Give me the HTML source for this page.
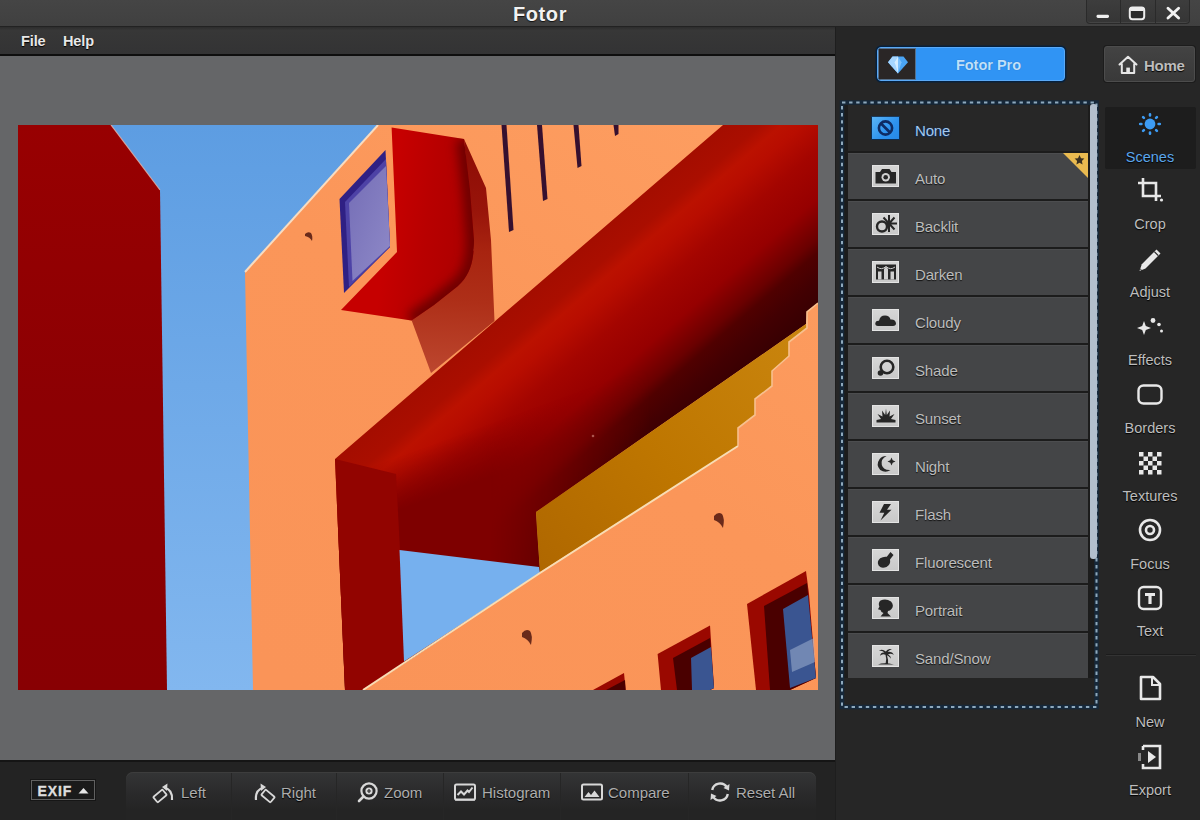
<!DOCTYPE html>
<html lang="en">
<head>
<meta charset="utf-8">
<title>Fotor</title>
<style>
html,body{margin:0;padding:0;}
body{width:1200px;height:820px;position:relative;overflow:hidden;background:#262626;font-family:"Liberation Sans",Arial,sans-serif;color:#d0d0d0;}
.abs{position:absolute;}
#titlebar{left:0;top:0;width:1200px;height:27px;background:linear-gradient(#454545,#404040);border-bottom:1.5px solid #222;box-sizing:border-box;}
#title{left:0;top:1px;width:1080px;text-align:center;font-weight:bold;font-size:20px;line-height:26px;color:#f2f2f2;letter-spacing:.6px;text-shadow:0 1px 1px #111;}
#menubar{left:0;top:27px;width:835px;height:29px;background:linear-gradient(#2c2c2c,#373737 12%,#333334);border-bottom:2px solid #0e0e0e;box-sizing:border-box;}
.menu{top:32.5px;font-weight:bold;font-size:14.5px;line-height:16px;letter-spacing:-.1px;color:#e8e8e8;text-shadow:0 1px 1px #000;}
#canvas{left:0;top:56px;width:835px;height:704px;background:#656668;}
#photo{left:18px;top:125px;width:800px;height:565px;}
#bottombar{left:0;top:760px;width:835px;height:60px;background:#232323;border-top:2px solid #151515;box-sizing:border-box;}
#right{left:835px;top:27px;width:365px;height:793px;background:#262626;border-left:1px solid #1e1e1e;box-sizing:border-box;}
</style>
</head>
<body>
<div id="titlebar" class="abs"></div>
<div id="title" class="abs">Fotor</div>
<div id="menubar" class="abs"></div>
<div class="abs menu" style="left:21px">File</div>
<div class="abs menu" style="left:63px">Help</div>
<div id="right" class="abs"></div>
<div id="canvas" class="abs"></div>
<svg id="photo" class="abs" viewBox="18 125 800 565" width="800" height="565">
<defs>
<linearGradient id="gsky" x1="0" y1="0" x2="0" y2="1"><stop offset="0" stop-color="#5d9de2"/><stop offset="1" stop-color="#82b7ef"/></linearGradient>
<linearGradient id="gpil" x1="0" y1="0" x2="0" y2="1"><stop offset="0" stop-color="#980001"/><stop offset=".5" stop-color="#8c0003"/><stop offset="1" stop-color="#880003"/></linearGradient>
<linearGradient id="gwall" gradientUnits="userSpaceOnUse" x1="300" y1="690" x2="700" y2="125"><stop offset="0" stop-color="#fa9458"/><stop offset=".55" stop-color="#fb9659"/><stop offset="1" stop-color="#fd9d60"/></linearGradient>
<linearGradient id="gbeam" gradientUnits="userSpaceOnUse" x1="580" y1="249" x2="710.6" y2="400.4"><stop offset="0" stop-color="#a40d00"/><stop offset=".12" stop-color="#aa0e00"/><stop offset=".19" stop-color="#bb1100"/><stop offset=".26" stop-color="#b80d00"/><stop offset=".4" stop-color="#a40500"/><stop offset=".585" stop-color="#960000"/><stop offset=".735" stop-color="#6a0000"/><stop offset=".79" stop-color="#500000"/><stop offset=".89" stop-color="#420002"/><stop offset="1" stop-color="#380002"/></linearGradient><linearGradient id="gunder" gradientUnits="userSpaceOnUse" x1="494.9" y1="421.9" x2="512" y2="468.9"><stop offset="0" stop-color="#7e0000" stop-opacity="0"/><stop offset="1" stop-color="#7e0000" stop-opacity="1"/></linearGradient><linearGradient id="gmx" gradientUnits="userSpaceOnUse" x1="490" y1="0" x2="650" y2="0"><stop offset="0" stop-color="#fff"/><stop offset="1" stop-color="#000"/></linearGradient><mask id="mbeam" maskUnits="userSpaceOnUse" x="18" y="125" width="800" height="565"><rect x="18" y="125" width="800" height="565" fill="url(#gmx)"/></mask>
<linearGradient id="gbox" gradientUnits="userSpaceOnUse" x1="392" y1="200" x2="476" y2="212"><stop offset="0" stop-color="#c60000"/><stop offset=".45" stop-color="#b80000"/><stop offset="1" stop-color="#ac0000"/></linearGradient><clipPath id="cbox"><path d="M391.6,127.6 L464,139 L470,190 L474,240 C474,262 470,275 458,286 L434,305 L411.5,320.5 L341,310 L397,252 Z"/></clipPath><filter id="fblur" x="-50%" y="-50%" width="200%" height="200%"><feGaussianBlur stdDeviation="5.5"/></filter>
<linearGradient id="gshad" gradientUnits="userSpaceOnUse" x1="480" y1="140" x2="470" y2="372"><stop offset="0" stop-color="#8c0c04"/><stop offset=".3" stop-color="#98140a"/><stop offset=".48" stop-color="#a82410"/><stop offset=".7" stop-color="#ae2f18"/><stop offset="1" stop-color="#bc462e"/></linearGradient>
<linearGradient id="gglass" x1="0" y1="0" x2="1" y2="1"><stop offset="0" stop-color="#746db6"/><stop offset="1" stop-color="#8f8ac8"/></linearGradient>
<linearGradient id="gyel" gradientUnits="userSpaceOnUse" x1="540" y1="560" x2="800" y2="330"><stop offset="0" stop-color="#b06800"/><stop offset=".45" stop-color="#be7600"/><stop offset="1" stop-color="#c9850e"/></linearGradient>
</defs>
<rect x="18" y="125" width="800" height="565" fill="url(#gsky)"/>
<!-- left pillar -->
<polygon points="18,125 111,125 160,190 167,690 18,690" fill="url(#gpil)"/>
<polyline points="111,125 160,190" fill="none" stroke="#e9b5a8" stroke-width="1.2" opacity=".8"/>
<!-- building -->
<polygon points="378,125 818,125 818,690 253,690 245,272" fill="url(#gwall)"/>
<polyline points="245,272 378,125" fill="none" stroke="#f9dcc0" stroke-width="2"/>
<!-- slits -->
<polygon points="501.5,125 506.5,125 513.5,230 509,232" fill="#36102f"/>
<polygon points="537,125 542,125 547.5,199 543,201" fill="#36102f"/>
<polygon points="573.5,125 578.5,125 581.5,166 577.5,168" fill="#36102f"/>
<polygon points="613.5,125 618.5,125 618.5,134 615,136" fill="#36102f"/>
<!-- window -->
<polygon points="339.5,199 385.5,150 390,247 344,293" fill="#2f2084"/>
<polygon points="345,202 386,159 390,247 349,287" fill="#4d42a6"/>
<polygon points="349,203 386,166 390,246 352.5,281" fill="url(#gglass)"/>
<!-- box shadow/side -->
<polygon points="464,139 486,188 491,240 494.5,321 431,373 411.5,320 474,250" fill="url(#gshad)"/>
<!-- box front -->
<path d="M391.6,127.6 L464,139 L470,190 L474,240 C474,262 470,275 458,286 L434,305 L411.5,320.5 L341,310 L397,252 Z" fill="url(#gbox)"/>
<g clip-path="url(#cbox)"><path d="M464,139 L470,190 L474,240 C474,262 470,275 458,286 L434,305 L411.5,320.5" fill="none" stroke="#6a0000" stroke-width="15" filter="url(#fblur)"/></g>
<!-- beam -->
<polygon points="335,459 723,125 818,125 818,303 807,312 806,324 536,512 540,572 404,664 363,690 345,690" fill="url(#gbeam)"/>
<polygon points="335,459 380,440 700,330 700,420 536,512 540,572 404,664 363,690 345,690" fill="url(#gunder)" mask="url(#mbeam)"/>
<polygon points="335,459 396,474 400,550 404,664 363,690 345,690" fill="#920400"/>
<!-- sky opening -->
<polygon points="399.5,550 539,567 540,573 404,661.5" fill="#76b0ee"/>
<!-- yellow -->
<polygon points="536,512 806,324 807,328 789,342 789,356 772,371 772,386 755,399 755,415 738,428 738,446 540,572 537,530" fill="url(#gyel)"/>
<!-- balcony -->
<polygon points="363,690 614,530 738,446 738,428 755,415 755,399 772,386 772,371 789,356 789,342 807,328 807,312 818,303 818,690" fill="url(#gwall)"/>
<polyline points="363,690 540,573 738,446" fill="none" stroke="#f8ddb4" stroke-width="2"/>
<polyline points="738,446 738,428 755,415 755,399 772,386 772,371 789,356 789,342 807,328 807,312 818,303" fill="none" stroke="#f7c08e" stroke-width="1.6"/>
<!-- windows lower right -->
<polygon points="747,604 806,571 809,594 816,678 790,690 756,690" fill="#9a0800"/>
<polygon points="764,606 807,583 816,678 790,690 770,690" fill="#4a0000"/>
<polygon points="783,609 808,595 816,678 790,688" fill="#3a5591"/>
<polygon points="790,650 814,638 815,662 792,672" fill="#9fb0cf" opacity=".55"/>
<polygon points="657.6,654 710,625.6 714,688 710,690 661,690" fill="#9a0800"/>
<polygon points="673,658 710,638 714,688 710,690 677,690" fill="#4a0000"/>
<polygon points="691,658 711,647 714,688 710,690 692,690" fill="#3a5591"/>
<polygon points="593,690 624,673 625.6,690" fill="#9a0800"/>
<polygon points="606,690 625,680 625.6,690" fill="#4a0000"/>
<!-- hooks -->
<path d="M522,633 q4,-5 8,-2 q3,4 1,14 q-3,-6 -9,-8 z" fill="#6a2a1a"/>
<path d="M714,516 q4,-5 8,-2 q3,4 1,14 q-3,-6 -9,-8 z" fill="#6a2a1a"/>
<path d="M305,234 q3,-3 6,-1 q2,3 1,8 q-2,-4 -7,-5 z" fill="#6a2a1a"/>
<circle cx="593" cy="436" r="1.3" fill="#c77a70" opacity=".7"/>
</svg>

<div id="bottombar" class="abs"></div>
<style>
#exif{left:31px;top:780px;width:64px;height:20px;box-sizing:border-box;border:1.5px solid #606060;background:#1a1a1a;box-shadow:0 0 0 1px #161616;}
#exif .tx{left:5.5px;top:.5px;line-height:19px;font-size:14px;font-weight:bold;letter-spacing:.9px;color:#dedede;-webkit-text-stroke:.35px #dedede;}
#bgroup{left:126px;top:772px;width:690px;height:48px;background:linear-gradient(#343536,#2a2a2b 45%,#242424 80%);border-radius:7px 7px 0 0;box-shadow:inset 0 1px 0 #3d3d3d;}
.bdiv{top:773px;width:1px;height:47px;background:#262626;}
.bt{top:783.5px;line-height:18px;font-size:15px;letter-spacing:0;color:#adadad;text-shadow:0 1px 1px #000;}
.bi{top:780px;width:24px;height:24px;}
</style>
<div id="exif" class="abs"><div class="abs tx">EXIF</div><svg class="abs" style="left:46px;top:6px" width="11" height="7" viewBox="0 0 11 7"><path d="M0.5,6.5 L5.5,1 L10.5,6.5 Z" fill="#e6e6e6"/></svg></div>
<div id="bgroup" class="abs"></div>
<div class="abs bdiv" style="left:231px"></div><div class="abs bdiv" style="left:336px"></div><div class="abs bdiv" style="left:443px"></div><div class="abs bdiv" style="left:560px"></div><div class="abs bdiv" style="left:688px"></div>
<svg class="abs bi" style="left:152px" viewBox="0 0 24 24"><g transform="rotate(-40 8 16)"><rect x="2" y="12.5" width="12" height="7" rx="1" fill="none" stroke="#d8d8d8" stroke-width="1.8"/></g><path d="M20,20 Q21,10 12.5,7.5" fill="none" stroke="#d8d8d8" stroke-width="2.2"/><path d="M10,7 L15.5,3.5 L15,11 Z" fill="#d8d8d8"/></svg>
<div class="abs bt" style="left:181px">Left</div>
<svg class="abs bi" style="left:252px" viewBox="0 0 24 24"><g transform="rotate(40 16 16)"><rect x="10" y="12.5" width="12" height="7" rx="1" fill="none" stroke="#d8d8d8" stroke-width="1.8"/></g><path d="M4,20 Q3,10 11.5,7.5" fill="none" stroke="#d8d8d8" stroke-width="2.2"/><path d="M14,7 L8.5,3.5 L9,11 Z" fill="#d8d8d8"/></svg>
<div class="abs bt" style="left:281px">Right</div>
<svg class="abs bi" style="left:356px" viewBox="0 0 24 24"><circle cx="13" cy="11" r="7.6" fill="none" stroke="#d8d8d8" stroke-width="2.2"/><path d="M7.5,16.5 L3,21" stroke="#d8d8d8" stroke-width="2.6" stroke-linecap="round"/><circle cx="13" cy="11" r="3.6" fill="#d8d8d8"/><path d="M13,9 V13 M11,11 H15" stroke="#2b2b2b" stroke-width="1.2"/></svg>
<div class="abs bt" style="left:384px">Zoom</div>
<svg class="abs bi" style="left:453px" viewBox="0 0 24 24"><rect x="2" y="4.5" width="20" height="15" rx="1.5" fill="none" stroke="#d8d8d8" stroke-width="2"/><path d="M4.5,15 L8,11.5 L11,14.5 L14.5,10.5 L16,12 L19.5,7.5" fill="none" stroke="#d8d8d8" stroke-width="2"/><path d="M2,20 H22" stroke="#d8d8d8" stroke-width="1.4"/></svg>
<div class="abs bt" style="left:482px">Histogram</div>
<svg class="abs bi" style="left:580px" viewBox="0 0 24 24"><rect x="2" y="4.5" width="20" height="15" rx="1.5" fill="none" stroke="#d8d8d8" stroke-width="2"/><path d="M4.5,17 L8.5,12 L11,15 L14.5,10.5 L19.5,17 Z" fill="#d8d8d8"/></svg>
<div class="abs bt" style="left:608px">Compare</div>
<svg class="abs bi" style="left:708px" viewBox="0 0 24 24"><path d="M4.2,10 A8,8 0 0 1 19,7.5" fill="none" stroke="#d8d8d8" stroke-width="2.4"/><path d="M19.8,14 A8,8 0 0 1 5,16.5" fill="none" stroke="#d8d8d8" stroke-width="2.4"/><path d="M21.5,4 L21,10.5 L15.5,8 Z" fill="#d8d8d8"/><path d="M2.5,20 L3,13.5 L8.5,16 Z" fill="#d8d8d8"/></svg>
<div class="abs bt" style="left:736px">Reset All</div>

<style>
.wbtn{top:0;height:24px;background:linear-gradient(#3d3d3d,#353535);border:1px solid #2a2a2a;border-top:none;box-sizing:border-box;box-shadow:inset 0 -1px 0 #444;}
#pro{left:877px;top:47px;width:188px;height:34px;box-sizing:border-box;border:1px solid #5aa9f6;border-radius:4px;background:#3094f4;overflow:hidden;box-shadow:0 0 0 1.5px #06203c;}
#pro .ic{left:0;top:0;width:38px;height:32px;background:#2a2626;box-shadow:inset 0 0 0 1px #55708c;}
#pro .tx{left:37px;top:.5px;width:147px;height:32px;line-height:33px;text-align:center;font-weight:bold;font-size:14.5px;color:#bfe0fb;text-shadow:0 0 1px #1b62b0;}
#home{left:1104px;top:46px;width:91px;height:36px;box-sizing:border-box;border:1px solid #4c4c4c;border-radius:3px;background:linear-gradient(#434343,#393939);box-shadow:0 0 0 1px #1c1c1c;}
#home .tx{left:39px;top:.5px;height:34px;line-height:35px;font-size:15px;letter-spacing:-.3px;color:#bdbdbd;text-shadow:0 1px 1px #000;font-weight:bold;}
#listbox{left:842px;top:102px;width:255px;height:605px;background:linear-gradient(#1c1c1c,#1c1c1c 576px,#242424 576px);}
.li{left:848px;width:240px;height:46px;background:#444547;box-shadow:inset 0 1px 0 #4c4d4f;}
.li.sel{background:#272727;box-shadow:none;}
.li .ic{left:24px;top:12px;width:27px;height:22px;background:linear-gradient(#d6d6d6,#c9c9c9);border:1px solid #e4e4e4;box-sizing:border-box;}
.li.sel .ic{left:23px;top:11px;width:29px;height:24px;background:linear-gradient(135deg,#5ab4f6,#2d92ee 60%,#2688e6);border:1px solid #0d2c50;border-top-color:#1a3a5c;}
.li .tx{left:67px;top:2px;height:46px;line-height:47px;font-size:15px;letter-spacing:-.15px;color:#bcbcbc;text-shadow:0 1px 1px #111;}
.li.sel .tx{color:#a4c8ec;text-shadow:0 0 2px #0c2f60,0 1px 1px #0c2f60;}
#scroll{left:1090px;top:104px;width:7px;height:455px;border-radius:3px;background:#b2bfcd;}
.tl{left:1104px;width:92px;text-align:center;font-size:14.5px;line-height:16px;color:#c8c8c8;text-shadow:0 1px 1px #000;}
.ti{left:1135px;width:30px;height:30px;}
</style>
<div class="abs wbtn" style="left:1086px;width:35px;border-radius:0 0 0 4px"></div>
<div class="abs wbtn" style="left:1120px;width:36px"></div>
<div class="abs wbtn" style="left:1155px;width:35px;border-radius:0 0 4px 0"></div>
<svg class="abs" style="left:1086px;top:0" width="104" height="24" viewBox="0 0 104 24">
<rect x="10.5" y="14.8" width="12.5" height="3.2" rx="1.4" fill="#f0f0f0"/>
<rect x="43.8" y="7.6" width="14.4" height="11.6" rx="2.6" fill="#2a2a2a" stroke="#ececec" stroke-width="2"/><rect x="43.8" y="7" width="14.4" height="4" rx="1.4" fill="#ececec"/>
<path d="M82,8.3 L92.6,18 M92.6,8.3 L82,18" stroke="#f2f2f2" stroke-width="2.9" stroke-linecap="round"/>
</svg>
<div id="pro" class="abs"><div class="abs ic"><svg class="abs" style="left:9px;top:7px" width="22" height="20" viewBox="0 0 22 20"><path d="M5.5,1.5 H16.5 L21,7.2 L11,18.5 L1,7.2 Z" fill="#4aa4f4"/><path d="M5.5,1.5 H11 V18.5 L1,7.2 Z" fill="#a6d6ff"/><path d="M11,1.5 L14.5,7.2 L11,18.5 L7.5,7.2 Z" fill="#7cc0fb"/><path d="M11,1.5 V18.5 L7.5,7.2 Z" fill="#d4ecff"/></svg></div><div class="abs tx">Fotor Pro</div></div>
<div id="home" class="abs"><svg class="abs" style="left:12px;top:7px" width="22" height="21" viewBox="0 0 22 21"><path d="M2.5,10.5 L11,2.8 L19.5,10.5 M4.8,9.5 V19 H17.2 V9.5" fill="none" stroke="#e6e6e6" stroke-width="2" stroke-linejoin="round" stroke-linecap="round"/><rect x="9.3" y="13.6" width="3.6" height="5" fill="#e6e6e6"/></svg><div class="abs tx">Home</div></div>
<div id="listbox" class="abs"></div><svg class="abs" style="left:838px;top:98px" width="264" height="614" viewBox="838 98 264 614"><rect x="842" y="102.5" width="254.5" height="604.5" fill="none" stroke="#16283a" stroke-width="4.5"/><rect x="842" y="102.5" width="254.5" height="604.5" fill="none" stroke="#8ea9bd" stroke-width="2" stroke-dasharray="3.4 3.7"/></svg>
<div class="abs li sel" style="top:105px"><div class="abs ic"><svg class="abs" style="left:-1px;top:-1px" width="29" height="24" viewBox="0 0 29 24"><circle cx="14.5" cy="12" r="6.6" fill="none" stroke="#0e2b63" stroke-width="2.6"/><path d="M10,7.5 L19,16.5" stroke="#0e2b63" stroke-width="2.6"/></svg></div><div class="abs tx">None</div></div>
<div class="abs li" style="top:153px"><div class="abs ic"><svg class="abs" style="left:-1px;top:-1px" width="27" height="22" viewBox="0 0 27 22"><path d="M3.5,7 H8 L10,4 H17.5 L19.5,7 H24 V18.5 H3.5 Z" fill="#262626"/><circle cx="13.7" cy="12.3" r="4.2" fill="#d0d0d0"/><circle cx="13.7" cy="12.3" r="2.3" fill="#262626"/></svg></div><div class="abs tx">Auto</div><svg class="abs" style="right:0;top:0" width="25" height="25" viewBox="0 0 25 25"><path d="M0,0 H25 V25 Z" fill="#e9ba50"/><path d="M16.5,2 l1.5,3.2 3.4,.4 -2.5,2.4 .7,3.4 -3.1,-1.7 -3.1,1.7 .7,-3.4 -2.5,-2.4 3.4,-.4z" fill="#3a3020"/></svg></div>
<div class="abs li" style="top:201px"><div class="abs ic"><svg class="abs" style="left:-1px;top:-1px" width="27" height="22" viewBox="0 0 27 22"><g stroke="#262626" stroke-width="2"><path d="M17,2 V19 M10,10.5 H25 M11.5,4.5 L22.5,16.5 M22.5,4.5 L11.5,16.5"/></g><circle cx="10" cy="13.5" r="5" fill="#d0d0d0" stroke="#262626" stroke-width="2.4"/></svg></div><div class="abs tx">Backlit</div></div>
<div class="abs li" style="top:249px"><div class="abs ic"><svg class="abs" style="left:-1px;top:-1px" width="27" height="22" viewBox="0 0 27 22"><rect x="4" y="3.5" width="20" height="15" fill="#262626"/><path d="M6,18.5 V10.5 H9.5 V18.5 M12,18.5 V8 L14,5.5 L16,8 V18.5 M18.5,18.5 V10.5 H22 V18.5" fill="#d0d0d0"/><path d="M5,6 Q9.5,9.5 14,5.5 Q18.5,9.5 23,6" fill="none" stroke="#d0d0d0" stroke-width="1"/></svg></div><div class="abs tx">Darken</div></div>
<div class="abs li" style="top:297px"><div class="abs ic"><svg class="abs" style="left:-1px;top:-1px" width="27" height="22" viewBox="0 0 27 22"><path d="M6,17 Q3,17 3.3,14 Q3.8,11.5 7,11.8 Q8,6.5 13,6.5 Q17.5,6.5 18.5,10.5 Q23.5,10 24,14.3 Q24,17 21,17 Z" fill="#262626"/></svg></div><div class="abs tx">Cloudy</div></div>
<div class="abs li" style="top:345px"><div class="abs ic"><svg class="abs" style="left:-1px;top:-1px" width="27" height="22" viewBox="0 0 27 22"><circle cx="15" cy="10" r="6.3" fill="none" stroke="#262626" stroke-width="2.6"/><circle cx="8.5" cy="16" r="2.8" fill="#262626"/></svg></div><div class="abs tx">Shade</div></div>
<div class="abs li" style="top:393px"><div class="abs ic"><svg class="abs" style="left:-1px;top:-1px" width="27" height="22" viewBox="0 0 27 22"><path d="M4.5,17.5 H23.5 V15 L19,14 L22.5,9 L17.5,11.5 L18,5.5 L14.8,10 L14,3.5 L13.2,10 L10,5.5 L10.5,11.5 L5.5,9 L9,14 L4.5,15 Z" fill="#262626"/></svg></div><div class="abs tx">Sunset</div></div>
<div class="abs li" style="top:441px"><div class="abs ic"><svg class="abs" style="left:-1px;top:-1px" width="27" height="22" viewBox="0 0 27 22"><path d="M14.5,3 Q8.5,6 9.8,12 Q11.5,17.5 18.5,17 Q13.5,20.5 8.2,17 Q3.5,12 7.5,6.3 Q10.2,2.8 14.5,3 Z" fill="#262626"/><path d="M19.5,4.5 L20.7,7.3 L23.5,8.5 L20.7,9.7 L19.5,12.5 L18.3,9.7 L15.5,8.5 L18.3,7.3 Z" fill="#262626"/></svg></div><div class="abs tx">Night</div></div>
<div class="abs li" style="top:489px"><div class="abs ic"><svg class="abs" style="left:-1px;top:-1px" width="27" height="22" viewBox="0 0 27 22"><path d="M12,3 H19 L15,8.8 H19.5 L8.5,19.5 L12.3,11.8 H7.5 Z" fill="#262626"/></svg></div><div class="abs tx">Flash</div></div>
<div class="abs li" style="top:537px"><div class="abs ic"><svg class="abs" style="left:-1px;top:-1px" width="27" height="22" viewBox="0 0 27 22"><path d="M18.5,3 L21.5,6 L18,10.5 Q19,15.5 14.5,18 Q9.5,20 6.8,16.8 Q4.3,12.5 8.2,9.3 Q11.5,7.2 14.8,7.8 Z" fill="#262626"/></svg></div><div class="abs tx">Fluorescent</div></div>
<div class="abs li" style="top:585px"><div class="abs ic"><svg class="abs" style="left:-1px;top:-1px" width="27" height="22" viewBox="0 0 27 22"><path d="M8.5,3.5 Q14,1 19,4.5 Q22.5,8.5 19.5,12 Q18,14 16,14 L15.5,16 L19,19.5 H8.5 L11.5,16 Q9,15.5 8.5,13 L6,12.3 L7.4,9.7 Q5.8,6 8.5,3.5 Z" fill="#262626"/></svg></div><div class="abs tx">Portrait</div></div>
<div class="abs li" style="top:633px;height:45px"><div class="abs ic"><svg class="abs" style="left:-1px;top:-1px" width="27" height="22" viewBox="0 0 27 22"><path d="M13.5,19.5 Q15,14 13.5,9.8 Q10.5,8.2 8,10.8 Q9,7 12.5,7.6 Q10,5 7,6 Q10,3.2 13.8,6.6 Q16,3 20,4.5 Q17,4.8 15.7,7 Q20,6 22,9.7 Q18.5,8.2 16,9.2 Q19,10.8 19,13.8 Q17,10.8 15,10.3 Q16.5,14.8 16,19.5 Z M6,19.5 Q11.5,16.8 22,19.5 Z" fill="#262626"/></svg></div><div class="abs tx">Sand/Snow</div></div>
<div id="scroll" class="abs"></div>
<div class="abs" style="left:1105px;top:107px;width:91px;height:62px;background:#1d1d1d;border-radius:2px;"></div>
<div class="abs" style="left:1106px;top:654px;width:90px;height:1px;background:#333;border-top:1px solid #1c1c1c"></div>
<svg class="abs ti" style="top:109px" viewBox="0 0 30 30"><circle cx="15" cy="15" r="5.4" fill="#3d9cf4"/><g stroke="#3d9cf4" stroke-width="2.6" stroke-linecap="round"><path d="M15,5.2 V6.4 M15,23.6 V24.8 M5.2,15 H6.4 M23.6,15 H24.8 M8.1,8.1 L8.9,8.9 M21.1,21.1 L21.9,21.9 M8.1,21.9 L8.9,21.1 M21.1,8.9 L21.9,8.1"/></g></svg><div class="abs tl" style="top:149px;color:#5ba6ec">Scenes</div>
<svg class="abs ti" style="top:175px" viewBox="0 0 30 30"><path d="M8,3 V21 H26 M3,8 H21 V26" fill="none" stroke="#e8e8e8" stroke-width="2.6"/><circle cx="26.5" cy="25" r="1.6" fill="#e8e8e8"/></svg><div class="abs tl" style="top:216px;color:#bdbdbd">Crop</div>
<svg class="abs ti" style="top:245px" viewBox="0 0 30 30"><path d="M21.5,4.5 L25.5,8.5 L10.5,23.5 L4.5,26 L6.8,19.2 Z" fill="#e8e8e8"/><path d="M19.3,6.7 L23.3,10.7" stroke="#262626" stroke-width="1.2"/><path d="M5.2,24 L7,25.6" stroke="#262626" stroke-width="1"/></svg><div class="abs tl" style="top:284px;color:#bdbdbd">Adjust</div>
<svg class="abs ti" style="top:312px" viewBox="0 0 30 30"><path d="M9,9 L10.8,14 L16,16 L10.8,18 L9,23 L7.2,18 L2,16 L7.2,14 Z" fill="#e8e8e8"/><circle cx="18" cy="8.5" r="2.4" fill="#e8e8e8"/><circle cx="24" cy="12.5" r="1.8" fill="#e8e8e8"/><circle cx="26.5" cy="19" r="1.5" fill="#e8e8e8"/></svg><div class="abs tl" style="top:352px;color:#bdbdbd">Effects</div>
<svg class="abs ti" style="top:380px" viewBox="0 0 30 30"><rect x="3.5" y="5.5" width="23" height="18" rx="5" fill="none" stroke="#e8e8e8" stroke-width="2.4"/></svg><div class="abs tl" style="top:420px;color:#bdbdbd">Borders</div>
<svg class="abs ti" style="top:448px" viewBox="0 0 30 30"><rect x="4.0" y="4.0" width="4.5" height="4.5" fill="#e8e8e8"/><rect x="13.0" y="4.0" width="4.5" height="4.5" fill="#e8e8e8"/><rect x="22.0" y="4.0" width="4.5" height="4.5" fill="#e8e8e8"/><rect x="8.5" y="8.5" width="4.5" height="4.5" fill="#e8e8e8"/><rect x="17.5" y="8.5" width="4.5" height="4.5" fill="#e8e8e8"/><rect x="4.0" y="13.0" width="4.5" height="4.5" fill="#e8e8e8"/><rect x="13.0" y="13.0" width="4.5" height="4.5" fill="#e8e8e8"/><rect x="22.0" y="13.0" width="4.5" height="4.5" fill="#e8e8e8"/><rect x="8.5" y="17.5" width="4.5" height="4.5" fill="#e8e8e8"/><rect x="17.5" y="17.5" width="4.5" height="4.5" fill="#e8e8e8"/><rect x="4.0" y="22.0" width="4.5" height="4.5" fill="#e8e8e8"/><rect x="13.0" y="22.0" width="4.5" height="4.5" fill="#e8e8e8"/><rect x="22.0" y="22.0" width="4.5" height="4.5" fill="#e8e8e8"/></svg><div class="abs tl" style="top:488px;color:#bdbdbd">Textures</div>
<svg class="abs ti" style="top:515px" viewBox="0 0 30 30"><circle cx="15" cy="15" r="10" fill="none" stroke="#e8e8e8" stroke-width="2.6"/><circle cx="15" cy="15" r="4" fill="none" stroke="#e8e8e8" stroke-width="2.6"/></svg><div class="abs tl" style="top:556px;color:#bdbdbd">Focus</div>
<svg class="abs ti" style="top:583px" viewBox="0 0 30 30"><rect x="4" y="4" width="22" height="22" rx="4.5" fill="none" stroke="#e8e8e8" stroke-width="2.4"/><path d="M10,10 H20 V13 H16.6 V21 H13.4 V13 H10 Z" fill="#e8e8e8"/></svg><div class="abs tl" style="top:623px;color:#bdbdbd">Text</div>
<svg class="abs ti" style="top:673px" viewBox="0 0 30 30"><path d="M6,4 H18 L25,11 V26 H6 Z" fill="none" stroke="#e8e8e8" stroke-width="2.6" stroke-linejoin="round"/><path d="M17,4 V12 H25" fill="none" stroke="#e8e8e8" stroke-width="2"/></svg><div class="abs tl" style="top:714px;color:#bdbdbd">New</div>
<svg class="abs ti" style="top:742px" viewBox="0 0 30 30"><path d="M8,4 H25 V26 H8 V22 M8,8 V4" fill="none" stroke="#e8e8e8" stroke-width="2.6"/><path d="M13,9 L21,15 L13,21 Z" fill="#e8e8e8"/><rect x="3" y="11" width="3" height="8" fill="#888"/></svg><div class="abs tl" style="top:782px;color:#bdbdbd">Export</div>

</body>
</html>
